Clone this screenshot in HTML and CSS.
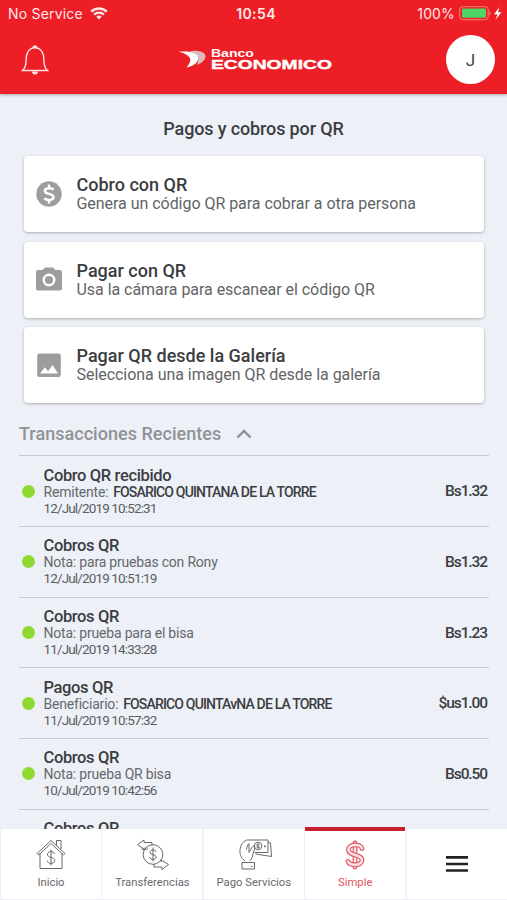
FILE: index.html
```html
<!DOCTYPE html>
<html lang="es">
<head>
<meta charset="utf-8">
<title>Pagos y cobros por QR</title>
<link rel="stylesheet" href="styles.css">
</head>
<body>
<div class="app">
  <header class="header">
    <div class="status">
      <div class="status-left"><span class="carrier">No Service</span>
        <svg width="18" height="13" viewBox="0 0 18 13" fill="none" stroke="#ffe9ea" stroke-width="2.4"><path d="M1.2 4.7a11 11 0 0 1 15.6 0M4.1 7.6a7 7 0 0 1 9.8 0"/><path d="M9 12.5 6.3 9.8a3.900 3.900 0 0 1 5.400 0z" fill="#ffe9ea" stroke="none"/></svg>
      </div>
      <span class="clock">10:54</span>
      <div class="status-right"><span class="charge">100%</span>
        <svg width="43" height="15" viewBox="0 0 43 15"><rect x=".7" y=".7" width="28.5" height="13" rx="3" fill="none" stroke="#f4846e"/><rect x="3" y="2.6" width="24" height="9.2" rx="1.2" fill="#4fd465"/><path d="M30.500 5v4.500q2.500-2.200 0-4.500z" fill="#f4846e"/><path d="M40.500 1 35 8.200h3.500l-2 5.500L42.500 6.200H39z" fill="#fff"/></svg>
      </div>
    </div>
    <div class="topbar">
      <svg class="bell" width="28" height="32" viewBox="0 0 28 32" fill="none" stroke="#ffe2e0" stroke-width="1.400"><path d="M1.500 26.500h25c-3-2.500-3.600-5-3.600-10.500 0-7-3-12.300-8.900-12.300S5.100 9 5.100 16c0 5.500-.6 8-3.600 10.500z"/><path d="M11.500 4a2.500 2.800 0 0 1 5 0zM11 27.500h6a3 3 0 0 1-6 0z" fill="#ffe2e0" stroke="none"/></svg>
      <div class="logo">
        <svg width="28" height="20" viewBox="0 0 28 20"><path d="M11 1.500C19-.5 28 2 27.500 6.500c-.5 4-4 6.500-8.500 8.500C22 7 19 3.500 11 1.500z" fill="#d9bdbc"/><path d="M.5 1.800C12 .8 21.500 3 20 9.500c-1 4.200-5 6.500-11.500 8C16 9.500 12 4.500.5 1.800z" fill="#fff"/></svg>
        <div class="logo-text"><span class="logo-small">Banco</span><span class="logo-big">ECONOMICO</span></div>
      </div>
      <div class="avatar">J</div>
    </div>
  </header>

  <main class="content">
    <h1 class="title">Pagos y cobros por QR</h1>
    <section class="cards">
      <article class="card">
        <svg class="card-icon" viewBox="0 0 26 26"><circle cx="13" cy="13" r="12.700" fill="#9d9d9d"/><path d="M17.500 8.800C16.300 6.900 8.900 6.200 8.900 9.900c0 4 8.600 2 8.600 6.200 0 3.900-7.800 3.400-9 1.100M13 3.500v4M13 18.500v4" fill="none" stroke="#fff" stroke-width="2.500"/></svg>
        <div><h2>Cobro con QR</h2><p>Genera un código QR para cobrar a otra persona</p></div>
      </article>
      <article class="card">
        <svg class="card-icon" viewBox="0 0 26 26"><path d="M9 .5h8L19.500 3H24a2 2 0 0 1 2 2v16.500a2 2 0 0 1-2 2H2a2 2 0 0 1-2-2V5a2 2 0 0 1 2-2h4.500z" fill="#9d9d9d"/><circle cx="13" cy="13" r="5.300" fill="#9d9d9d" stroke="#fff" stroke-width="2.400"/></svg>
        <div><h2>Pagar con QR</h2><p>Usa la cámara para escanear el código QR</p></div>
      </article>
      <article class="card">
        <svg class="card-icon" viewBox="0 0 26 26"><rect x="1.200" y="1.500" width="23.600" height="23.500" rx="2.500" fill="#9d9d9d"/><path d="m4 21.500 4.800-6.200 3.300 4 4.400-6.300 5.500 8.500z" fill="#fff"/></svg>
        <div><h2>Pagar QR desde la Galería</h2><p>Selecciona una imagen QR desde la galería</p></div>
      </article>
    </section>

    <div class="recent"><span>Transacciones Recientes</span>
      <svg width="16" height="10" viewBox="0 0 16 10" fill="none" stroke="#8c8f92" stroke-width="2.300"><path d="m1.500 8.500 6.500-6.500 6.500 6.500"/></svg>
    </div>
    <ul class="list">
      <li><i class="dot"></i><div class="info"><h3>Cobro QR recibido</h3><p>Remitente: <b>FOSARICO QUINTANA DE LA TORRE</b></p><time>12/Jul/2019 10:52:31</time></div><strong>Bs1.32</strong></li>
      <li><i class="dot"></i><div class="info"><h3>Cobros QR</h3><p>Nota: para pruebas con Rony</p><time>12/Jul/2019 10:51:19</time></div><strong>Bs1.32</strong></li>
      <li><i class="dot"></i><div class="info"><h3>Cobros QR</h3><p>Nota: prueba para el bisa</p><time>11/Jul/2019 14:33:28</time></div><strong>Bs1.23</strong></li>
      <li><i class="dot"></i><div class="info"><h3>Pagos QR</h3><p>Beneficiario: <b>FOSARICO QUINTAvNA DE LA TORRE</b></p><time>11/Jul/2019 10:57:32</time></div><strong>$us1.00</strong></li>
      <li><i class="dot"></i><div class="info"><h3>Cobros QR</h3><p>Nota: prueba QR bisa</p><time>10/Jul/2019 10:42:56</time></div><strong>Bs0.50</strong></li>
      <li><div class="info last"><h3>Cobros QR</h3></div></li>
    </ul>
  </main>

  <nav class="nav">
    <a class="tab">
      <svg width="36" height="32" viewBox="0 0 36 32"><path d="M7 14v15.500h22V14M4 14.500 18 1.500l14 13M23.500 6V1.500h4.500V10M4 14.500l1.500 1.500L18 4.500 30.500 16l1.500-1.500"/><path d="M21.500 15c-.5-3.500-7-3-7 .3 0 4 7.200 2.400 7.200 6.300 0 3.600-7.200 3.700-7.500 0M18 10.500v16"/></svg>
      <span>Inicio</span></a>
    <a class="tab">
      <svg width="36" height="32" viewBox="0 0 36 32"><circle cx="19" cy="15.500" r="9.800"/><path d="M22 13c-.5-3-6-2.600-6 .2 0 3.200 6.200 1.800 6.200 5 0 3-6.200 3-6.400 0M19 8.500v14"/><path d="M11 8.500v2.200L3.500 5.700 10 1v2.500h8v3M7.500 10c2 1 4.500 1 6.500-.5M27 23v-2.200l7.500 4.700-6.500 5V28h-8v-3"/></svg>
      <span>Transferencias</span></a>
    <a class="tab">
      <svg class="pay" width="38" height="32" viewBox="0 0 38 32"><path d="M8 22C4 19 2.500 15 3 10.500 3.500 6 6 2.500 9.500 1H31v12.500H17.500M31 3.500l2.500.5 1 13.500-16-2.500M9.500 10.500c.5-3 1-4.500 2.500-6v9c1-2 2.500-5 5.500-7.500 1 3-1 6.500-1.500 9-.5 3-1.500 4.500-3 7M5 23.500h12.500v6.500H5zM14 27.500h1.500"/><circle cx="21" cy="7" r="3.800"/><path d="M22.500 5.700c-1-1.200-3.200-.5-2.700.7.500 1 2.700.5 2.700 1.800 0 1-2.200 1-3 0M21 4.500v5M27 7.300h2M28 6.300v2"/></svg>
      <span>Pago Servicios</span></a>
    <a class="tab active">
      <svg width="36" height="32" viewBox="0 0 36 32"><path class="s-outline" d="M18 4v24" stroke-linecap="round"/><path class="s-inner" d="M18 4v24" stroke-linecap="round"/><path class="s-outline" d="M25 9.500c-1-5-13.500-5-13.500 1.500 0 6 13.500 4 13.500 10 0 6-12 6-14 1.500" stroke-linecap="round"/><path class="s-inner" d="M25 9.500c-1-5-13.500-5-13.500 1.500 0 6 13.500 4 13.500 10 0 6-12 6-14 1.500" stroke-linecap="round"/></svg>
      <span>Simple</span></a>
    <a class="tab menu"><svg width="22" height="16" viewBox="0 0 22 16"><path d="M0 1.400h22M0 8h22M0 14.500h22"/></svg></a>
  </nav>
</div>
</body>
</html>
```

FILE: styles.css
```css
* { box-sizing: border-box; margin: 0; padding: 0; }
body { font-family: Roboto, "Liberation Sans", sans-serif; background: #edf0f7; color: #3b3d41; }
.app { width: 507px; height: 900px; display: flex; flex-direction: column; overflow: hidden; }

.header { height: 94px; flex: none; background: #ee1e26; box-shadow: 0 1px 3px rgba(0,0,0,.3); color: #ffe9ea; }
.status { height: 27px; padding: 0 5px 0 8px; display: grid; grid-template-columns: 1fr auto 1fr; align-items: center; font-family: Inter, sans-serif; font-size: 14px; }
.status-left, .status-right { display: flex; align-items: center; gap: 7px; }
.status-right { justify-content: flex-end; gap: 4px; }
.carrier { letter-spacing: .2px; }
.charge { letter-spacing: .15px; }
.clock { font-weight: 600; letter-spacing: .4px; padding-left: 2px; }
.topbar { height: 65px; display: grid; grid-template-columns: 1fr auto 1fr; align-items: center; padding: 0 12px 0 21px; }
.logo { display: flex; align-items: center; gap: 5px; color: #fff; margin-left: -7px; }
.logo-text { display: flex; flex-direction: column; gap: 1px; font-family: "Liberation Sans", sans-serif; font-weight: 700; width: 121px; }
.logo-small { font-size: 10px; line-height: 11px; width: 30px; transform: scaleX(1.4); transform-origin: left; }
.logo-big { font-size: 12.500px; line-height: 11px; width: 82px; transform: scaleX(1.540); transform-origin: left; -webkit-text-stroke: .4px #fff; }
.avatar { justify-self: end; width: 49px; height: 49px; border-radius: 50%; background: #fff; color: #444; font-size: 17px; display: flex; align-items: center; justify-content: center; }

.content { flex: 1; min-height: 0; overflow: hidden; padding-top: 24px; }
.title { text-align: center; font-size: 18px; line-height: 22px; font-weight: 500; letter-spacing: -.14px; }
.cards { padding: 16px 23px 0 24px; display: flex; flex-direction: column; gap: 9.700px; }
.card { height: 76px; background: #fff; border-radius: 4px; box-shadow: 0 1px 3px rgba(0,0,0,.28); display: flex; align-items: center; gap: 14.500px; padding-left: 12px; }
.card-icon { width: 26px; height: 26px; }
.card h2 { font-size: 18px; line-height: 20px; font-weight: 500; }
.card p { font-size: 16px; line-height: 18px; color: #626466; letter-spacing: -.04px; }

.recent { display: flex; align-items: center; gap: 15px; padding: 20px 19px 11px; height: 52px; font-size: 18px; line-height: 21px; font-weight: 500; color: #8f9296; letter-spacing: .03px; }
.list { list-style: none; margin: 0 18px 0 19px; }
.list li { height: 70.700px; border-top: 1.500px solid #c6c9cd; display: flex; align-items: center; }
.dot { width: 13px; height: 13px; border-radius: 50%; background: #8fd930; margin-left: 3px; }
.info { flex: 1; margin: -1px 0 0 8.500px; }
.info.last { margin: 0 0 0 24.500px; align-self: flex-start; padding-top: 9px; }
.info h3 { font-size: 16.500px; line-height: 19px; font-weight: 500; letter-spacing: -.36px; }
.info p { font-size: 14px; line-height: 15px; color: #65686c; white-space: nowrap; letter-spacing: -.2px; }
.info b { font-weight: 500; color: #3b3d41; letter-spacing: -.83px; margin-left: 1.500px; }
.info time { display: block; font-size: 13.500px; line-height: 16px; color: #5b5e62; letter-spacing: -.86px; }
.list strong { font-size: 15.500px; font-weight: 500; letter-spacing: -1.100px; margin-right: 2px; }

.nav { height: 71px; flex: none; display: grid; grid-template-columns: repeat(5, 100px); gap: 1.400px; padding: 0 0 1px 1px; z-index: 1; background: #eff1f6; }
.tab { background: #fff; display: flex; flex-direction: column; align-items: center; padding-top: 10px; gap: 5px; font-size: 11.300px; line-height: 14px; color: #68696b; position: relative; }
.tab svg { fill: none; stroke: #68696b; stroke-width: 1; }
.tab .pay { margin-left: 5px; }
.tab.active { color: #e25560; box-shadow: inset 0 2px #c6202e, 0 -2px #c6202e; }
.tab.active svg { stroke: #dd5963; }
.tab.active .s-outline { stroke-width: 4.800; }
.tab.active .s-inner { stroke: #fbe3e5; stroke-width: 2.500; }
.tab.menu { justify-content: center; padding-top: 0; }
.tab.menu svg { stroke: #222; stroke-width: 2.600; }
```
